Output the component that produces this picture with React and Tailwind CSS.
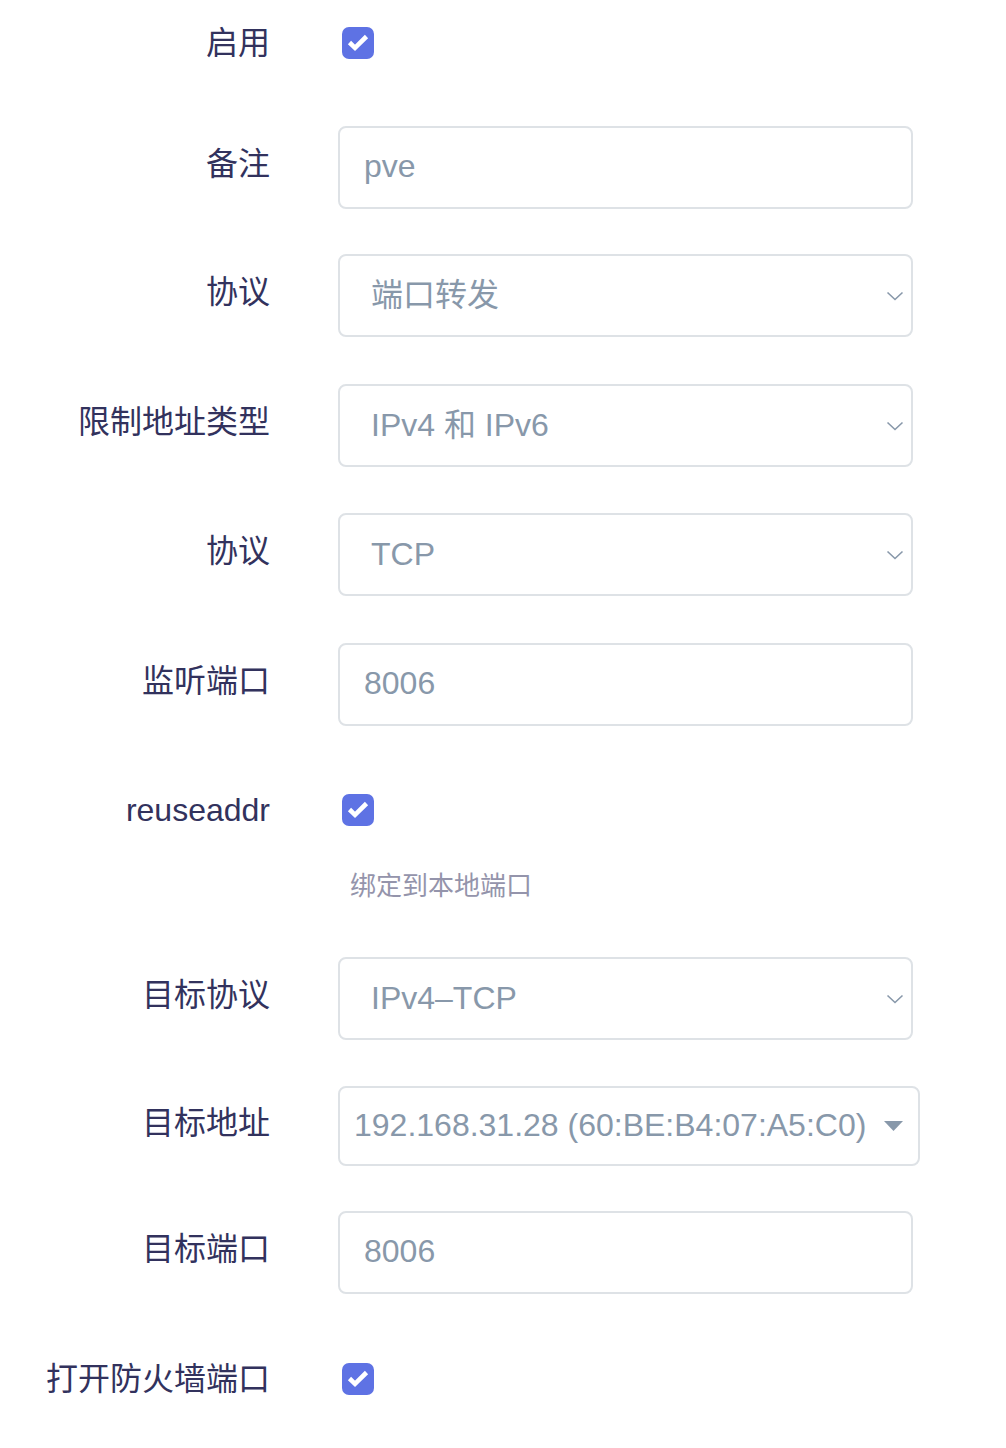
import React from "react";

const FONT = { fontFamily: '"Liberation Sans", "Noto Sans CJK SC", sans-serif' };

function Check() {
  return (
    <div className="w-[32px] h-[32px] rounded-[7px] bg-[#5e72e4]">
      <svg width="32" height="32" viewBox="0 0 32 32">
        <path d="M7.5 15.5 L13 20.8 L24.5 9.5" fill="none" stroke="#fff" strokeWidth="4.6" strokeLinecap="butt" strokeLinejoin="miter" />
      </svg>
    </div>
  );
}

function Label({ children, up }) {
  return (
    <div className={"w-[270px] shrink-0 text-right text-[32px] leading-[40px] text-[#32325d] " + (up ? "-mt-[7px]" : "")}>{children}</div>
  );
}

function Row({ label, children, className = "", up = true }) {
  return (
    <div className={"flex items-center " + className}>
      <Label up={up}>{label}</Label>
      <div className="ml-[68px]">{children}</div>
    </div>
  );
}

function Input({ value }) {
  return (
    <div className="w-[575px] h-[83px] border-2 border-[#dee2e6] rounded-[8px] bg-white flex items-center pl-[24px] pb-[3px] text-[32px] text-[#8898aa]">
      {value}
    </div>
  );
}

function Select({ value }) {
  return (
    <div className="w-[575px] h-[83px] border-2 border-[#dee2e6] rounded-[8px] bg-white flex items-center justify-between pl-[31px] pr-[7px] text-[32px] text-[#8898aa]">
      <span className="-mt-[2px]">{value}</span>
      <svg width="18" height="10" viewBox="0 0 18 10">
        <path d="M1.5 1.5 L9 8.5 L16.5 1.5" fill="none" stroke="#8898aa" strokeWidth="1.6" />
      </svg>
    </div>
  );
}

function AddrSelect({ value }) {
  return (
    <div className="w-[582px] h-[80px] border-2 border-[#dee2e6] rounded-[8px] bg-white flex items-center justify-between pl-[14px] pr-[15px] text-[32px] text-[#8898aa]">
      <span className="-mt-[2px]">{value}</span>
      <svg width="19" height="10" viewBox="0 0 19 10">
        <path d="M0 0 L19 0 L9.5 10 Z" fill="#8898aa" />
      </svg>
    </div>
  );
}

export default function App() {
  return (
    <div className="w-[1006px] h-[1448px] bg-white" style={FONT}>
      <Row label="启用" className="h-[86px]" up={false}>
        <div className="ml-[4px]"><Check /></div>
      </Row>
      <Row label="备注" className="mt-[40px]">
        <Input value="pve" />
      </Row>
      <Row label="协议" className="mt-[45px]">
        <Select value="端口转发" />
      </Row>
      <Row label="限制地址类型" className="mt-[47px]">
        <Select value="IPv4 和 IPv6" />
      </Row>
      <Row label="协议" className="mt-[46px]">
        <Select value="TCP" />
      </Row>
      <Row label="监听端口" className="mt-[47px]">
        <Input value="8006" />
      </Row>
      <Row label="reuseaddr" className="mt-[41px] h-[86px]" up={false}>
        <div className="ml-[4px]"><Check /></div>
      </Row>
      <div className="mt-[15px] ml-[350px] h-[36px] leading-[36px] text-[26px] text-[#9494ab]">绑定到本地端口</div>
      <Row label="目标协议" className="mt-[53px]">
        <Select value="IPv4–TCP" />
      </Row>
      <Row label="目标地址" className="mt-[46px]">
        <AddrSelect value="192.168.31.28 (60:BE:B4:07:A5:C0)" />
      </Row>
      <Row label="目标端口" className="mt-[45px]">
        <Input value="8006" />
      </Row>
      <Row label="打开防火墙端口" className="mt-[42px] h-[86px]" up={false}>
        <div className="ml-[4px]"><Check /></div>
      </Row>
    </div>
  );
}
